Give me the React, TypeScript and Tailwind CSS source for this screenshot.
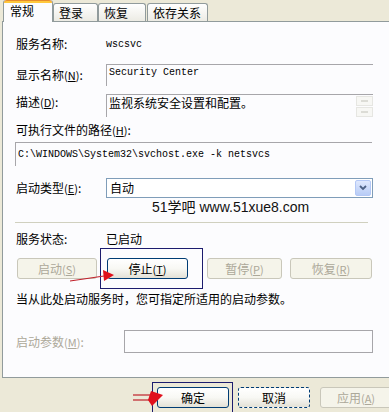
import React from 'react';

const cjk = "font-['Noto_Sans_CJK_SC',sans-serif]";
const mono = "font-['Liberation_Mono',monospace]";

const Key: React.FC<{ k: string }> = ({ k }) => (
  <span className="text-[11px]">
    (<span className="underline underline-offset-1">{k}</span>)
  </span>
);

const Label: React.FC<{ text: string; k?: string; colon?: boolean; gray?: boolean; className?: string }> = ({
  text,
  k,
  colon = true,
  gray,
  className = '',
}) => (
  <span className={`${cjk} text-[12px] leading-[14px] whitespace-nowrap ${gray ? 'text-[#aca899]' : 'text-black'} ${className}`}>
    {text}
    {k && <Key k={k} />}
    {colon && ':'}
  </span>
);

const XpButton: React.FC<{
  text: string;
  k?: string;
  w: number;
  disabled?: boolean;
  dashed?: boolean;
  className?: string;
}> = ({ text, k, w, disabled, dashed, className = '' }) => (
  <div
    style={{ width: w }}
    className={`h-[21px] shrink-0 rounded-[3px] border flex items-center justify-center ${cjk} text-[12px] leading-[14px] ${
      disabled
        ? 'border-[#c9c7ba] bg-[#f5f4ea] text-[#aca899]'
        : 'border-[#003c74] bg-gradient-to-b from-white via-[#f8f8f4] to-[#e3e1d6] text-black'
    } ${dashed ? 'border-dashed' : ''} ${className}`}
  >
    {text}
    {k && <Key k={k} />}
  </div>
);

const Tab: React.FC<{ text: string; w: number; active?: boolean }> = ({ text, w, active }) =>
  active ? (
    <div
      style={{ width: w }}
      className={`relative z-10 h-[22px] -mb-px bg-[#fcfcfe] border-x border-[#919b9c] rounded-t-[3px] ${cjk} text-[12px] leading-[14px] text-black flex flex-col`}
    >
      <div className="h-[3px] rounded-t-[3px] bg-[#ffc83c] border-t border-[#e68b2c]" />
      <div className="pl-[6px] pt-[1px]">{text}</div>
    </div>
  ) : (
    <div
      style={{ width: w }}
      className={`h-[18px] border border-b-0 border-[#919b9c] rounded-t-[3px] bg-gradient-to-b from-white to-[#ecebe4] ${cjk} text-[12px] leading-[14px] text-black pl-[5px] pt-[2px] whitespace-nowrap overflow-hidden`}
    >
      {text}
    </div>
  );

const App: React.FC = () => {
  return (
    <div className="relative w-[389px] h-[412px] overflow-hidden bg-[#ece9d8]">
      {/* tabs */}
      <div className="h-[21px] pl-[3px] flex items-end">
        <Tab text="常规" w={50} active />
        <Tab text="登录" w={45} />
        <Tab text="恢复" w={48} />
        <div className="w-[1px]" />
        <Tab text="依存关系" w={61} />
      </div>

      {/* panel */}
      <div className="ml-[2px] w-[400px] h-[357px] border border-[#919b9c] bg-[#fcfcfe] flex flex-col">
        <div className="mt-[15px] h-[14px] flex items-center pl-[13px]">
          <Label text="服务名称" className="w-[90px]" />
          <span className={`${mono} text-[10px] text-black`}>wscsvc</span>
        </div>

        <div className="mt-[13px] h-[22px] flex items-center pl-[13px]">
          <Label text="显示名称" k="N" className="w-[90px]" />
          <div className={`w-[267px] h-[22px] border-t border-l border-[#a7a6aa] pl-[2px] pt-[2px] ${mono} text-[10px] leading-[12px] text-black`}>
            Security Center
          </div>
        </div>

        <div className="mt-[8px] h-[23px] flex items-start pl-[13px]">
          <Label text="描述" k="D" className="w-[90px] pt-[1px]" />
          <div className="w-[267px] h-[23px] border-t border-l border-[#a7a6aa] flex">
            <span className={`flex-1 pl-[2px] pt-[1px] ${cjk} text-[12px] leading-[14px] text-black`}>
              监视系统安全设置和配置。
            </span>
            <div className="w-[17px] flex flex-col gap-[1px] pt-[1px]">
              <div className="h-[10px] border border-[#e6e6e2] bg-[#f7f7f4] flex items-center justify-center">
                <div className="w-[7px] h-[2px] bg-[#dcdcd6]" />
              </div>
              <div className="h-[10px] border border-[#e6e6e2] bg-[#f7f7f4] flex items-center justify-center">
                <div className="w-[7px] h-[2px] bg-[#dcdcd6]" />
              </div>
            </div>
          </div>
        </div>

        <div className="mt-[6px] h-[14px] pl-[13px] flex items-center">
          <Label text="可执行文件的路径" k="H" />
        </div>

        <div className="mt-[5px] ml-[12px] w-[357px] h-[24px] border-t border-l border-[#a7a6aa] flex items-center pl-[2px]">
          <span className={`${mono} text-[10px] leading-[12px] text-black whitespace-pre`}>
            C:\WINDOWS\System32\svchost.exe -k netsvcs
          </span>
        </div>

        <div className="mt-[12px] h-[20px] flex items-center pl-[13px]">
          <Label text="启动类型" k="E" className="w-[90px]" />
          <div className="w-[267px] h-[20px] border border-[#7f9db9] bg-white flex items-center">
            <span className={`flex-1 pl-[3px] ${cjk} text-[12px] leading-[14px] text-black`}>自动</span>
            <div className="w-[16px] h-[16px] mr-[1px] rounded-[2px] border border-[#b4c8f6] bg-gradient-to-b from-[#dfe8fd] to-[#b8ccf6] flex items-center justify-center">
              <svg width="8" height="6" viewBox="0 0 8 6">
                <path d="M1 1 L4 4 L7 1" fill="none" stroke="#4d6185" strokeWidth="1.8" />
              </svg>
            </div>
          </div>
        </div>

        {/* watermark + group separator */}
        <div className="mt-[2px] h-[15px] pl-[149px] flex items-center">
          <span className="font-['Liberation_Sans','Noto_Sans_CJK_SC',sans-serif] text-[14px] leading-[15px] text-[#111] whitespace-nowrap">
            51学吧 www.51xue8.com
          </span>
        </div>
        <div className="mt-[7px] ml-[12px] w-[353px] h-[1px] bg-[#d0d0bf]" />

        <div className="mt-[9px] h-[14px] flex items-center pl-[13px]">
          <Label text="服务状态" className="w-[90px]" />
          <Label text="已启动" colon={false} />
        </div>

        <div className="mt-[12px] h-[21px] flex items-center pl-[14px]">
          <XpButton text="启动" k="S" w={80} disabled />
          <XpButton text="停止" k="T" w={81} className="ml-[10px]" />
          <XpButton text="暂停" k="P" w={75} disabled className="ml-[19px]" />
          <XpButton text="恢复" k="R" w={82} disabled className="ml-[8px]" />
        </div>

        <div className="mt-[13px] h-[14px] flex items-center pl-[13px]">
          <Label text="当从此处启动服务时，您可指定所适用的启动参数。" colon={false} />
        </div>

        <div className="mt-[24px] h-[23px] flex items-center pl-[13px]">
          <Label text="启动参数" k="M" gray className="w-[108px]" />
          <div className="w-[249px] h-[23px] border border-[#a7a6aa] bg-[#fcfcfe]" />
        </div>
      </div>

      {/* dialog buttons */}
      <div className="mt-[9px] h-[21px] flex items-center pl-[157px]">
        <XpButton text="确定" w={72} />
        <XpButton text="取消" w={72} dashed className="ml-[9px]" />
        <XpButton text="应用" k="A" w={72} disabled className="ml-[10px]" />
      </div>

      {/* annotations */}
      <div className="absolute left-[100px] top-[248px] w-[103px] h-[41px] border border-[#1c1c6e]" />
      <div className="absolute left-[152px] top-[382px] w-[81px] h-[40px] border border-[#1c1c6e]" />
      <svg className="absolute left-0 top-0" width="389" height="412" viewBox="0 0 389 412">
        <line x1="70" y1="281" x2="104" y2="276" stroke="#c0202a" strokeWidth="1.2" />
        <polygon points="103,270 114,275 104,281" fill="#e0101c" />
        <line x1="133" y1="395" x2="154" y2="395" stroke="#c0202a" strokeWidth="1.2" />
        <line x1="133" y1="400" x2="154" y2="400" stroke="#c0202a" strokeWidth="1.2" />
        <polygon points="151,391 163,395 152,406 148,400" fill="#e0101c" />
      </svg>
    </div>
  );
};

export default App;
